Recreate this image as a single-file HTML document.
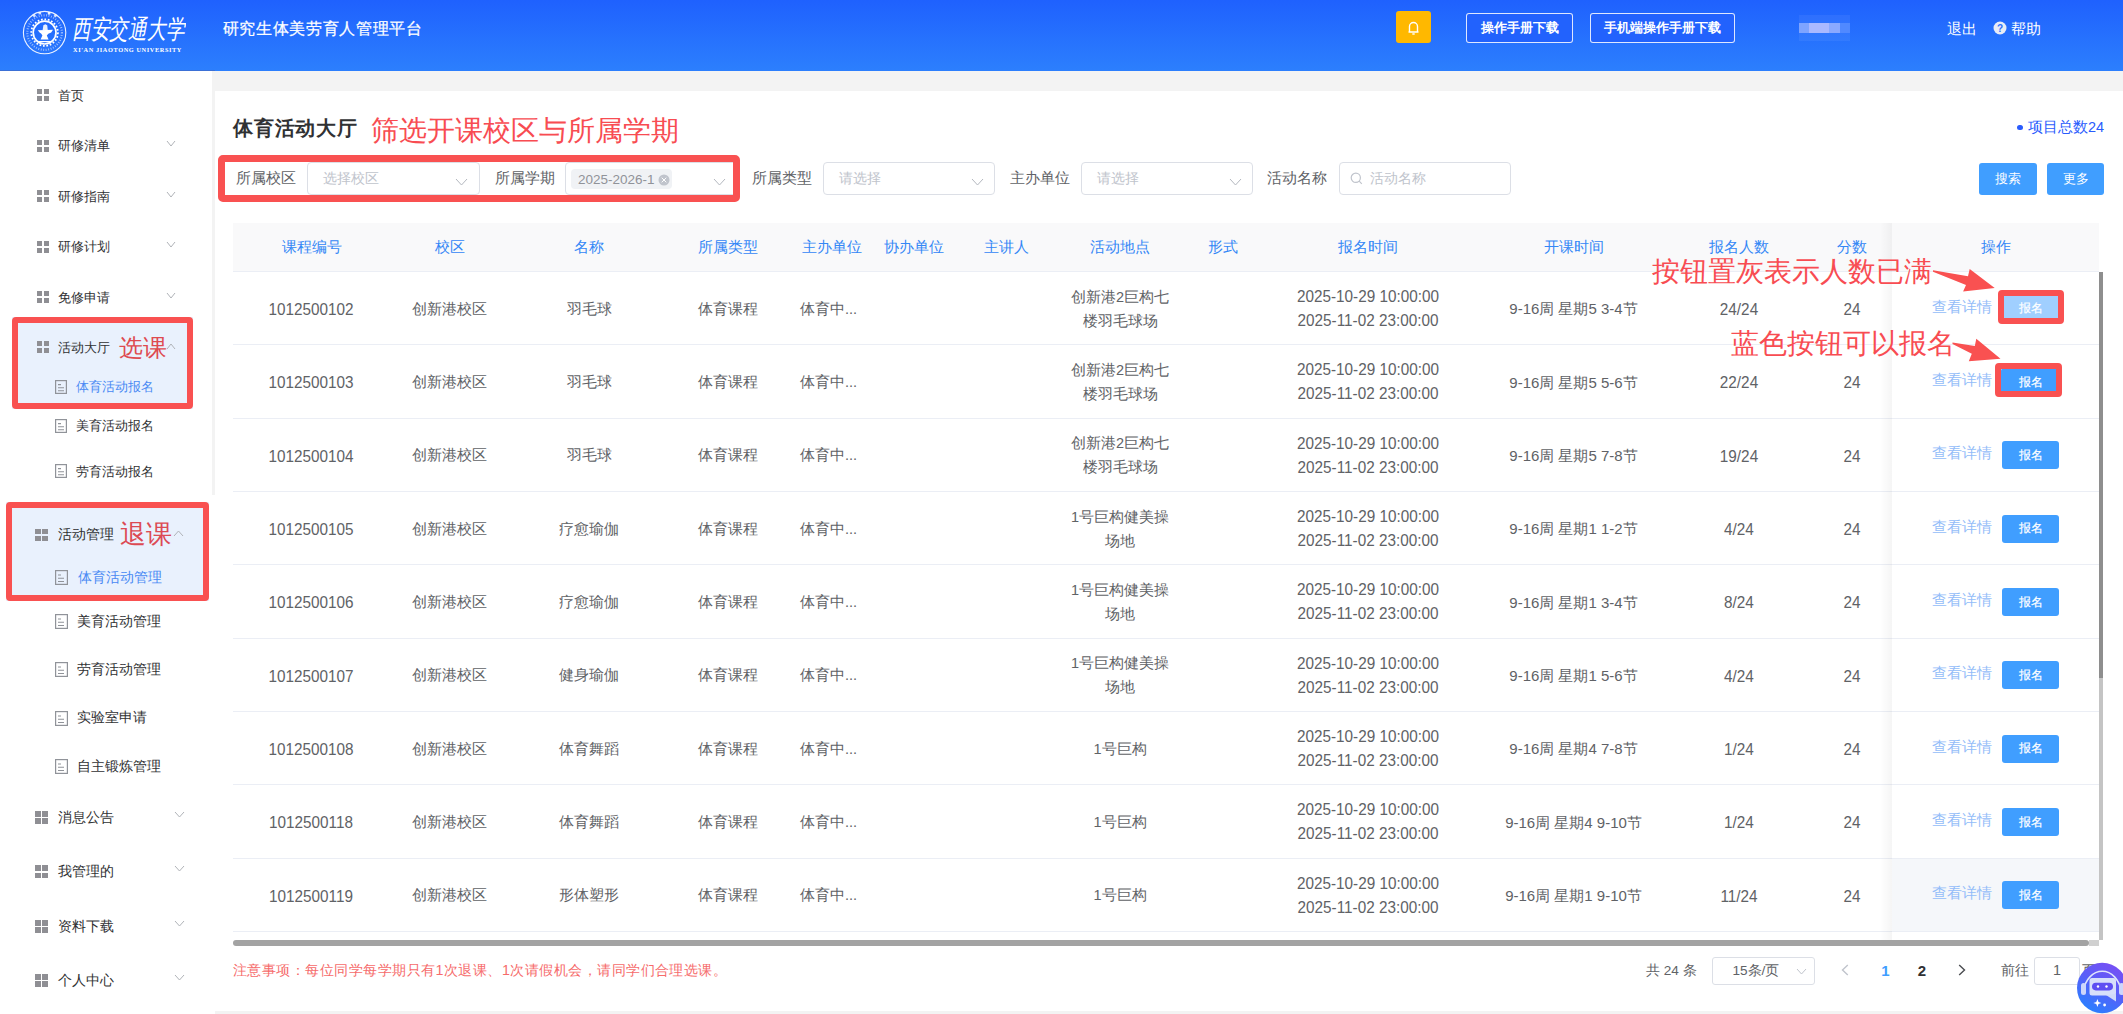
<!DOCTYPE html>
<html><head><meta charset="utf-8"><title>体育活动大厅</title>
<style>
html,body{margin:0;padding:0;}
body{width:2123px;height:1014px;overflow:hidden;position:relative;background:#fff;font-family:"Liberation Sans", sans-serif;}
.t{position:absolute;white-space:nowrap;}
.b{position:absolute;box-sizing:border-box;}
svg{position:absolute;overflow:visible;}
</style></head><body>

<div class="b" style="left:212px;top:70px;width:1911px;height:425px;background:#f3f3f3"></div>
<div class="b" style="left:215px;top:70px;width:1908px;height:944px;background:#f3f3f3"></div>
<div class="b" style="left:215px;top:91px;width:1908px;height:920px;background:#fff"></div>
<div class="b" style="left:0px;top:0px;width:2123px;height:71px;background:linear-gradient(180deg,#1f61fe 0%,#2c7ffd 100%)"></div>
<div class="b" style="left:0px;top:70px;width:215px;height:1px;background:#3b70d6"></div>
<svg style="left:0;top:0" width="212" height="70" viewBox="0 0 212 70">
<g fill="none" stroke="#fff">
<circle cx="44.6" cy="32.6" r="21.2" stroke-width="1.1" opacity="0.9"/>
<circle cx="44.6" cy="32.6" r="17.3" stroke-width="2.2" stroke-dasharray="0.9 1.6" opacity="0.55"/>
<circle cx="44.6" cy="32.6" r="13.3" stroke-width="1.8" stroke-dasharray="1.7 1.75"/>
<circle cx="44.6" cy="32.6" r="11.4" stroke-width="1.7"/>
</g>
<g fill="#fff">
<rect x="33" y="14.5" width="2.6" height="2.6" transform="rotate(-35 34.3 15.8)" opacity="0.8"/>
<rect x="38.5" y="12" width="2.6" height="2.4" opacity="0.8"/>
<rect x="47.8" y="12" width="2.6" height="2.6" opacity="0.9"/>
<rect x="54" y="14.5" width="2.6" height="2.6" transform="rotate(35 55.3 15.8)" opacity="0.8"/>
<path d="M37.8 30.2 L53 29.8 L51.2 32.6 Q47.6 33.6 46.8 35.6 L48.6 39.6 L40.6 39.6 L42.4 35.6 Q41.6 33.6 39.6 32.6 Z"/>
<path d="M42.6 30.2 L43.4 25.2 L45.4 24.2 L47.2 25.2 L47.8 30.2 Z" opacity="0.9"/>
<rect x="38.6" y="41" width="12.2" height="1.2"/>
</g>
</svg>
<div class="t" style="left:72.0px;top:10.0px;font-size:26px;line-height:39px;color:#fff;font-weight:normal;font-family:&#39;Liberation Serif&#39;,serif;font-style:italic;transform:scaleX(0.72);transform-origin:0 50%">西安交通大学</div>
<div class="t" style="left:73.0px;top:44.5px;font-size:6.3px;line-height:9px;color:#fff;font-weight:normal;font-family:&#39;Liberation Serif&#39;,serif;letter-spacing:0.6px;font-weight:bold">XI&#39;AN JIAOTONG UNIVERSITY</div>
<div class="t" style="left:222.5px;top:15.6px;font-size:16.3px;line-height:24px;color:#fff;font-weight:normal;letter-spacing:0.68px;-webkit-text-stroke:0.25px #fff">研究生体美劳育人管理平台</div>
<div class="b" style="left:1396px;top:11px;width:35px;height:32px;background:#ffb800;border-radius:3px"></div>
<svg style="left:1396px;top:11px" width="35" height="32" viewBox="0 0 35 32">
<path d="M12.5 21 L22.5 21 M13.5 21 V15.5 A4 4 0 0 1 21.5 15.5 V21" fill="none" stroke="#fff" stroke-width="1.4"/>
<path d="M16.3 23 h2.4" stroke="#fff" stroke-width="1.4"/>
</svg>
<div class="b" style="left:1466px;top:13px;width:107px;height:30px;border:1.5px solid rgba(255,255,255,0.85);border-radius:3px;background:#2262fd"></div>
<div class="t" style="left:1466.0px;top:19.0px;width:107px;text-align:center;font-size:12.5px;line-height:18px;color:#fff;font-weight:bold;">操作手册下载</div>
<div class="b" style="left:1590px;top:13px;width:145px;height:30px;border:1.5px solid rgba(255,255,255,0.85);border-radius:3px;background:#2262fd"></div>
<div class="t" style="left:1590.0px;top:19.0px;width:145px;text-align:center;font-size:12.5px;line-height:18px;color:#fff;font-weight:bold;">手机端操作手册下载</div>
<div class="b" style="left:1799px;top:15px;width:51px;height:26px;background:rgba(255,255,255,0.06)"></div>
<div class="b" style="left:1799px;top:23px;width:10px;height:10px;background:#7ea4ff"></div>
<div class="b" style="left:1809px;top:23px;width:20px;height:10px;background:#aab9ff"></div>
<div class="b" style="left:1829px;top:23px;width:11px;height:10px;background:#8aa9ff"></div>
<div class="b" style="left:1840px;top:23px;width:10px;height:10px;background:#5089ff"></div>
<div class="t" style="left:1947.0px;top:17.5px;font-size:15px;line-height:22px;color:#fff;font-weight:normal;">退出</div>
<svg style="left:1993px;top:21px" width="14" height="14" viewBox="0 0 14 14">
<circle cx="7" cy="7" r="6.5" fill="#e8ecf6"/>
<text x="7" y="10.8" font-size="10" text-anchor="middle" fill="#2c6ffd" font-family="Liberation Sans" font-weight="bold">?</text>
</svg>
<div class="t" style="left:2011.0px;top:17.5px;font-size:15px;line-height:22px;color:#fff;font-weight:normal;">帮助</div>
<div class="b" style="left:12px;top:317px;width:181px;height:92px;background:#e9f1fd"></div>
<div class="b" style="left:6px;top:502px;width:203px;height:99px;background:#e9f1fd"></div>
<div class="b" style="left:37px;top:89.0px;width:5px;height:5px;background:#8f8f94"></div><div class="b" style="left:44px;top:89.0px;width:5px;height:5px;background:#8f8f94"></div><div class="b" style="left:37px;top:96.0px;width:5px;height:5px;background:#8f8f94"></div><div class="b" style="left:44px;top:96.0px;width:5px;height:5px;background:#8f8f94"></div>
<div class="t" style="left:58.0px;top:85.5px;font-size:13px;line-height:19px;color:#303133;font-weight:normal;">首页</div>
<div class="b" style="left:37px;top:139.5px;width:5px;height:5px;background:#8f8f94"></div><div class="b" style="left:44px;top:139.5px;width:5px;height:5px;background:#8f8f94"></div><div class="b" style="left:37px;top:146.5px;width:5px;height:5px;background:#8f8f94"></div><div class="b" style="left:44px;top:146.5px;width:5px;height:5px;background:#8f8f94"></div>
<div class="t" style="left:58.0px;top:136.0px;font-size:13px;line-height:19px;color:#303133;font-weight:normal;">研修清单</div>
<svg style="left:167px;top:141.0px" width="8" height="5" viewBox="0 0 8 5"><path d="M0 0 L4.0 5 L8 0" fill="none" stroke="#b0b3b8" stroke-width="1"/></svg>
<div class="b" style="left:37px;top:190.0px;width:5px;height:5px;background:#8f8f94"></div><div class="b" style="left:44px;top:190.0px;width:5px;height:5px;background:#8f8f94"></div><div class="b" style="left:37px;top:197.0px;width:5px;height:5px;background:#8f8f94"></div><div class="b" style="left:44px;top:197.0px;width:5px;height:5px;background:#8f8f94"></div>
<div class="t" style="left:58.0px;top:186.5px;font-size:13px;line-height:19px;color:#303133;font-weight:normal;">研修指南</div>
<svg style="left:167px;top:191.5px" width="8" height="5" viewBox="0 0 8 5"><path d="M0 0 L4.0 5 L8 0" fill="none" stroke="#b0b3b8" stroke-width="1"/></svg>
<div class="b" style="left:37px;top:240.5px;width:5px;height:5px;background:#8f8f94"></div><div class="b" style="left:44px;top:240.5px;width:5px;height:5px;background:#8f8f94"></div><div class="b" style="left:37px;top:247.5px;width:5px;height:5px;background:#8f8f94"></div><div class="b" style="left:44px;top:247.5px;width:5px;height:5px;background:#8f8f94"></div>
<div class="t" style="left:58.0px;top:237.0px;font-size:13px;line-height:19px;color:#303133;font-weight:normal;">研修计划</div>
<svg style="left:167px;top:242.0px" width="8" height="5" viewBox="0 0 8 5"><path d="M0 0 L4.0 5 L8 0" fill="none" stroke="#b0b3b8" stroke-width="1"/></svg>
<div class="b" style="left:37px;top:291.0px;width:5px;height:5px;background:#8f8f94"></div><div class="b" style="left:44px;top:291.0px;width:5px;height:5px;background:#8f8f94"></div><div class="b" style="left:37px;top:298.0px;width:5px;height:5px;background:#8f8f94"></div><div class="b" style="left:44px;top:298.0px;width:5px;height:5px;background:#8f8f94"></div>
<div class="t" style="left:58.0px;top:287.5px;font-size:13px;line-height:19px;color:#303133;font-weight:normal;">免修申请</div>
<svg style="left:167px;top:292.5px" width="8" height="5" viewBox="0 0 8 5"><path d="M0 0 L4.0 5 L8 0" fill="none" stroke="#b0b3b8" stroke-width="1"/></svg>
<div class="b" style="left:37px;top:341.0px;width:5px;height:5px;background:#8f8f94"></div><div class="b" style="left:44px;top:341.0px;width:5px;height:5px;background:#8f8f94"></div><div class="b" style="left:37px;top:348.0px;width:5px;height:5px;background:#8f8f94"></div><div class="b" style="left:44px;top:348.0px;width:5px;height:5px;background:#8f8f94"></div>
<div class="t" style="left:58.0px;top:337.5px;font-size:13px;line-height:19px;color:#303133;font-weight:normal;">活动大厅</div>
<svg style="left:167px;top:343.5px" width="8" height="5" viewBox="0 0 8 5"><path d="M0 5 L4.0 0 L8 5" fill="none" stroke="#b0b3b8" stroke-width="1"/></svg>
<svg style="left:55px;top:380.0px" width="12" height="14" viewBox="0 0 12 14">
<rect x="0.6" y="0.6" width="10.8" height="12.8" fill="none" stroke="#909399" stroke-width="1.2"/>
<path d="M3 4.62h3 M3 7.700000000000001h6 M3 10.780000000000001h6" stroke="#909399" stroke-width="1.1"/>
</svg>
<div class="t" style="left:76.0px;top:378.0px;font-size:12.5px;line-height:18px;color:#4a8af4;font-weight:normal;">体育活动报名</div>
<svg style="left:55px;top:419.0px" width="12" height="14" viewBox="0 0 12 14">
<rect x="0.6" y="0.6" width="10.8" height="12.8" fill="none" stroke="#909399" stroke-width="1.2"/>
<path d="M3 4.62h3 M3 7.700000000000001h6 M3 10.780000000000001h6" stroke="#909399" stroke-width="1.1"/>
</svg>
<div class="t" style="left:76.0px;top:417.0px;font-size:12.5px;line-height:18px;color:#303133;font-weight:normal;">美育活动报名</div>
<svg style="left:55px;top:464.0px" width="12" height="14" viewBox="0 0 12 14">
<rect x="0.6" y="0.6" width="10.8" height="12.8" fill="none" stroke="#909399" stroke-width="1.2"/>
<path d="M3 4.62h3 M3 7.700000000000001h6 M3 10.780000000000001h6" stroke="#909399" stroke-width="1.1"/>
</svg>
<div class="t" style="left:76.0px;top:462.6px;font-size:12.5px;line-height:18px;color:#303133;font-weight:normal;">劳育活动报名</div>
<div class="b" style="left:35px;top:528.5px;width:5.8px;height:5.8px;background:#8f8f94"></div><div class="b" style="left:42.2px;top:528.5px;width:5.8px;height:5.8px;background:#8f8f94"></div><div class="b" style="left:35px;top:535.7px;width:5.8px;height:5.8px;background:#8f8f94"></div><div class="b" style="left:42.2px;top:535.7px;width:5.8px;height:5.8px;background:#8f8f94"></div>
<div class="t" style="left:58.0px;top:525.0px;font-size:13.5px;line-height:20px;color:#303133;font-weight:normal;">活动管理</div>
<svg style="left:174px;top:531.0px" width="9" height="5" viewBox="0 0 9 5"><path d="M0 5 L4.5 0 L9 5" fill="none" stroke="#b0b3b8" stroke-width="1"/></svg>
<svg style="left:55px;top:570.0px" width="13" height="15" viewBox="0 0 13 15">
<rect x="0.6" y="0.6" width="11.8" height="13.8" fill="none" stroke="#909399" stroke-width="1.2"/>
<path d="M3 4.95h3 M3 8.25h6 M3 11.55h6" stroke="#909399" stroke-width="1.1"/>
</svg>
<div class="t" style="left:78.0px;top:567.5px;font-size:13.5px;line-height:20px;color:#4a8af4;font-weight:normal;">体育活动管理</div>
<svg style="left:55px;top:614.0px" width="13" height="15" viewBox="0 0 13 15">
<rect x="0.6" y="0.6" width="11.8" height="13.8" fill="none" stroke="#909399" stroke-width="1.2"/>
<path d="M3 4.95h3 M3 8.25h6 M3 11.55h6" stroke="#909399" stroke-width="1.1"/>
</svg>
<div class="t" style="left:76.6px;top:611.5px;font-size:13.5px;line-height:20px;color:#303133;font-weight:normal;">美育活动管理</div>
<svg style="left:55px;top:662.3px" width="13" height="15" viewBox="0 0 13 15">
<rect x="0.6" y="0.6" width="11.8" height="13.8" fill="none" stroke="#909399" stroke-width="1.2"/>
<path d="M3 4.95h3 M3 8.25h6 M3 11.55h6" stroke="#909399" stroke-width="1.1"/>
</svg>
<div class="t" style="left:76.6px;top:659.8px;font-size:13.5px;line-height:20px;color:#303133;font-weight:normal;">劳育活动管理</div>
<svg style="left:55px;top:710.7px" width="13" height="15" viewBox="0 0 13 15">
<rect x="0.6" y="0.6" width="11.8" height="13.8" fill="none" stroke="#909399" stroke-width="1.2"/>
<path d="M3 4.95h3 M3 8.25h6 M3 11.55h6" stroke="#909399" stroke-width="1.1"/>
</svg>
<div class="t" style="left:76.6px;top:708.2px;font-size:13.5px;line-height:20px;color:#303133;font-weight:normal;">实验室申请</div>
<svg style="left:55px;top:759.0px" width="13" height="15" viewBox="0 0 13 15">
<rect x="0.6" y="0.6" width="11.8" height="13.8" fill="none" stroke="#909399" stroke-width="1.2"/>
<path d="M3 4.95h3 M3 8.25h6 M3 11.55h6" stroke="#909399" stroke-width="1.1"/>
</svg>
<div class="t" style="left:76.6px;top:756.5px;font-size:13.5px;line-height:20px;color:#303133;font-weight:normal;">自主锻炼管理</div>
<div class="b" style="left:35px;top:811.2px;width:5.8px;height:5.8px;background:#8f8f94"></div><div class="b" style="left:42.2px;top:811.2px;width:5.8px;height:5.8px;background:#8f8f94"></div><div class="b" style="left:35px;top:818.4000000000001px;width:5.8px;height:5.8px;background:#8f8f94"></div><div class="b" style="left:42.2px;top:818.4000000000001px;width:5.8px;height:5.8px;background:#8f8f94"></div>
<div class="t" style="left:58.0px;top:807.7px;font-size:13.5px;line-height:20px;color:#303133;font-weight:normal;">消息公告</div>
<svg style="left:175px;top:812.2px" width="9" height="5" viewBox="0 0 9 5"><path d="M0 0 L4.5 5 L9 0" fill="none" stroke="#b0b3b8" stroke-width="1"/></svg>
<div class="b" style="left:35px;top:865.3px;width:5.8px;height:5.8px;background:#8f8f94"></div><div class="b" style="left:42.2px;top:865.3px;width:5.8px;height:5.8px;background:#8f8f94"></div><div class="b" style="left:35px;top:872.5px;width:5.8px;height:5.8px;background:#8f8f94"></div><div class="b" style="left:42.2px;top:872.5px;width:5.8px;height:5.8px;background:#8f8f94"></div>
<div class="t" style="left:58.0px;top:861.8px;font-size:13.5px;line-height:20px;color:#303133;font-weight:normal;">我管理的</div>
<svg style="left:175px;top:866.3px" width="9" height="5" viewBox="0 0 9 5"><path d="M0 0 L4.5 5 L9 0" fill="none" stroke="#b0b3b8" stroke-width="1"/></svg>
<div class="b" style="left:35px;top:920.0px;width:5.8px;height:5.8px;background:#8f8f94"></div><div class="b" style="left:42.2px;top:920.0px;width:5.8px;height:5.8px;background:#8f8f94"></div><div class="b" style="left:35px;top:927.2px;width:5.8px;height:5.8px;background:#8f8f94"></div><div class="b" style="left:42.2px;top:927.2px;width:5.8px;height:5.8px;background:#8f8f94"></div>
<div class="t" style="left:58.0px;top:916.5px;font-size:13.5px;line-height:20px;color:#303133;font-weight:normal;">资料下载</div>
<svg style="left:175px;top:921.0px" width="9" height="5" viewBox="0 0 9 5"><path d="M0 0 L4.5 5 L9 0" fill="none" stroke="#b0b3b8" stroke-width="1"/></svg>
<div class="b" style="left:35px;top:974.0px;width:5.8px;height:5.8px;background:#8f8f94"></div><div class="b" style="left:42.2px;top:974.0px;width:5.8px;height:5.8px;background:#8f8f94"></div><div class="b" style="left:35px;top:981.2px;width:5.8px;height:5.8px;background:#8f8f94"></div><div class="b" style="left:42.2px;top:981.2px;width:5.8px;height:5.8px;background:#8f8f94"></div>
<div class="t" style="left:58.0px;top:970.5px;font-size:13.5px;line-height:20px;color:#303133;font-weight:normal;">个人中心</div>
<svg style="left:175px;top:975.0px" width="9" height="5" viewBox="0 0 9 5"><path d="M0 0 L4.5 5 L9 0" fill="none" stroke="#b0b3b8" stroke-width="1"/></svg>
<div class="b" style="left:12px;top:317px;width:181px;height:92px;border:6px solid #f95151;border-radius:4px"></div>
<div class="t" style="left:119.0px;top:329.5px;font-size:24px;line-height:36px;color:#de4a50;font-weight:normal;">选课</div>
<div class="b" style="left:6px;top:502px;width:203px;height:99px;border:6px solid #f95151;border-radius:4px"></div>
<div class="t" style="left:120.0px;top:514.5px;font-size:26px;line-height:39px;color:#dc4a54;font-weight:normal;">退课</div>
<div class="t" style="left:233.0px;top:112.6px;font-size:20.4px;line-height:30px;color:#303133;font-weight:bold;letter-spacing:0.75px">体育活动大厅</div>
<div class="t" style="left:371.0px;top:109.7px;font-size:27.5px;line-height:41px;color:#f84c52;font-weight:normal;">筛选开课校区与所属学期</div>
<div class="t" style="left:2017px;top:124.5px;width:5.5px;height:5.5px;border-radius:50%;background:#2a5cfd"></div>
<div class="t" style="left:2028.0px;top:116.5px;font-size:14.5px;line-height:21px;color:#2a5cfd;font-weight:normal;">项目总数24</div>
<div class="t" style="left:236.0px;top:168.0px;font-size:14.5px;line-height:21px;color:#606266;font-weight:normal;">所属校区</div>
<div class="b" style="left:307px;top:162px;width:173px;height:33px;border:1px solid #dcdfe6;border-radius:4px;background:#fff"></div><div class="t" style="left:323.0px;top:168.5px;font-size:13.5px;line-height:20px;color:#c0c4cc;font-weight:normal;">选择校区</div><svg style="left:456px;top:178.5px" width="11" height="6" viewBox="0 0 11 6"><path d="M0 0 L5.5 6 L11 0" fill="none" stroke="#b4b8bf" stroke-width="1"/></svg>
<div class="t" style="left:495.0px;top:168.0px;font-size:14.5px;line-height:21px;color:#606266;font-weight:normal;">所属学期</div>
<div class="b" style="left:565px;top:162px;width:175px;height:33px;border:1px solid #dcdfe6;border-radius:4px;background:#fff"></div><svg style="left:714px;top:178.5px" width="11" height="6" viewBox="0 0 11 6"><path d="M0 0 L5.5 6 L11 0" fill="none" stroke="#b4b8bf" stroke-width="1"/></svg>
<div class="b" style="left:571px;top:169px;width:101px;height:20px;background:#f0f2f5;border-radius:4px"></div>
<div class="t" style="left:578.0px;top:170.0px;font-size:13.5px;line-height:20px;color:#909399;font-weight:normal;">2025-2026-1</div>
<svg style="left:658px;top:174px" width="12" height="12" viewBox="0 0 12 12"><circle cx="6" cy="6" r="5.5" fill="#c0c4cc"/><path d="M3.7 3.7l4.6 4.6M8.3 3.7l-4.6 4.6" stroke="#fff" stroke-width="1"/></svg>
<div class="b" style="left:218px;top:155px;width:522px;height:47px;border:7px solid #f95151;border-radius:5px"></div>
<div class="t" style="left:752.0px;top:168.0px;font-size:14.5px;line-height:21px;color:#606266;font-weight:normal;">所属类型</div>
<div class="b" style="left:823px;top:162px;width:172px;height:33px;border:1px solid #dcdfe6;border-radius:4px;background:#fff"></div><div class="t" style="left:839.0px;top:168.5px;font-size:13.5px;line-height:20px;color:#c0c4cc;font-weight:normal;">请选择</div><svg style="left:972px;top:178.5px" width="11" height="6" viewBox="0 0 11 6"><path d="M0 0 L5.5 6 L11 0" fill="none" stroke="#b4b8bf" stroke-width="1"/></svg>
<div class="t" style="left:1010.0px;top:168.0px;font-size:14.5px;line-height:21px;color:#606266;font-weight:normal;">主办单位</div>
<div class="b" style="left:1081px;top:162px;width:172px;height:33px;border:1px solid #dcdfe6;border-radius:4px;background:#fff"></div><div class="t" style="left:1097.0px;top:168.5px;font-size:13.5px;line-height:20px;color:#c0c4cc;font-weight:normal;">请选择</div><svg style="left:1230px;top:178.5px" width="11" height="6" viewBox="0 0 11 6"><path d="M0 0 L5.5 6 L11 0" fill="none" stroke="#b4b8bf" stroke-width="1"/></svg>
<div class="t" style="left:1267.0px;top:168.0px;font-size:14.5px;line-height:21px;color:#606266;font-weight:normal;">活动名称</div>
<div class="b" style="left:1339px;top:162px;width:172px;height:33px;border:1px solid #dcdfe6;border-radius:4px;background:#fff"></div>
<svg style="left:1350px;top:172px" width="13" height="13" viewBox="0 0 13 13"><circle cx="5.8" cy="5.8" r="4.6" fill="none" stroke="#c0c4cc" stroke-width="1.2"/><path d="M9.2 9.2l2.6 2.6" stroke="#c0c4cc" stroke-width="1.2"/></svg>
<div class="t" style="left:1370.0px;top:168.5px;font-size:13.5px;line-height:20px;color:#c0c4cc;font-weight:normal;">活动名称</div>
<div class="b" style="left:1979px;top:163px;width:58px;height:32px;background:#409eff;border-radius:3px"></div>
<div class="t" style="left:1979.0px;top:169.5px;width:58px;text-align:center;font-size:12.5px;line-height:18px;color:#fff;font-weight:normal;">搜索</div>
<div class="b" style="left:2047px;top:163px;width:57px;height:32px;background:#409eff;border-radius:3px"></div>
<div class="t" style="left:2047.0px;top:169.5px;width:57px;text-align:center;font-size:12.5px;line-height:18px;color:#fff;font-weight:normal;">更多</div>
<div class="b" style="left:233px;top:223px;width:1866px;height:48px;background:#f9f9fa"></div>
<div class="b" style="left:233px;top:271px;width:1866px;height:1px;background:#ebeef5"></div>
<div class="t" style="left:231.5px;top:236.5px;width:160px;text-align:center;font-size:14.5px;line-height:21px;color:#3487f6;font-weight:normal;">课程编号</div>
<div class="t" style="left:370.0px;top:236.5px;width:160px;text-align:center;font-size:14.5px;line-height:21px;color:#3487f6;font-weight:normal;">校区</div>
<div class="t" style="left:509.0px;top:236.5px;width:160px;text-align:center;font-size:14.5px;line-height:21px;color:#3487f6;font-weight:normal;">名称</div>
<div class="t" style="left:648.0px;top:236.5px;width:160px;text-align:center;font-size:14.5px;line-height:21px;color:#3487f6;font-weight:normal;">所属类型</div>
<div class="t" style="left:751.5px;top:236.5px;width:160px;text-align:center;font-size:14.5px;line-height:21px;color:#3487f6;font-weight:normal;">主办单位</div>
<div class="t" style="left:834.0px;top:236.5px;width:160px;text-align:center;font-size:14.5px;line-height:21px;color:#3487f6;font-weight:normal;">协办单位</div>
<div class="t" style="left:926.0px;top:236.5px;width:160px;text-align:center;font-size:14.5px;line-height:21px;color:#3487f6;font-weight:normal;">主讲人</div>
<div class="t" style="left:1040.0px;top:236.5px;width:160px;text-align:center;font-size:14.5px;line-height:21px;color:#3487f6;font-weight:normal;">活动地点</div>
<div class="t" style="left:1143.0px;top:236.5px;width:160px;text-align:center;font-size:14.5px;line-height:21px;color:#3487f6;font-weight:normal;">形式</div>
<div class="t" style="left:1287.5px;top:236.5px;width:160px;text-align:center;font-size:14.5px;line-height:21px;color:#3487f6;font-weight:normal;">报名时间</div>
<div class="t" style="left:1493.5px;top:236.5px;width:160px;text-align:center;font-size:14.5px;line-height:21px;color:#3487f6;font-weight:normal;">开课时间</div>
<div class="t" style="left:1658.5px;top:236.5px;width:160px;text-align:center;font-size:14.5px;line-height:21px;color:#3487f6;font-weight:normal;">报名人数</div>
<div class="t" style="left:1772.0px;top:236.5px;width:160px;text-align:center;font-size:14.5px;line-height:21px;color:#3487f6;font-weight:normal;">分数</div>
<div class="t" style="left:1916.0px;top:236.5px;width:160px;text-align:center;font-size:14.5px;line-height:21px;color:#3487f6;font-weight:normal;">操作</div>
<div class="b" style="left:1892px;top:858px;width:207px;height:73px;background:#f5f7fa"></div>
<div class="b" style="left:233px;top:344px;width:1866px;height:1px;background:#ebeef5"></div>
<div class="t" style="left:230.5px;top:296.9px;width:160px;text-align:center;font-size:17.3px;line-height:25px;color:#606266;font-weight:normal;transform:scaleX(0.885)">1012500102</div>
<div class="t" style="left:369.5px;top:298.7px;width:160px;text-align:center;font-size:14.5px;line-height:21px;color:#606266;font-weight:normal;">创新港校区</div>
<div class="t" style="left:509.0px;top:298.7px;width:160px;text-align:center;font-size:14.5px;line-height:21px;color:#606266;font-weight:normal;">羽毛球</div>
<div class="t" style="left:648.0px;top:298.7px;width:160px;text-align:center;font-size:14.5px;line-height:21px;color:#606266;font-weight:normal;">体育课程</div>
<div class="t" style="left:800.0px;top:298.7px;font-size:14.5px;line-height:21px;color:#606266;font-weight:normal;">体育中...</div>
<div class="t" style="left:1020.0px;top:286.7px;width:200px;text-align:center;font-size:14.5px;line-height:21px;color:#606266;font-weight:normal;">创新港2巨构七</div>
<div class="t" style="left:1020.0px;top:310.7px;width:200px;text-align:center;font-size:14.5px;line-height:21px;color:#606266;font-weight:normal;">楼羽毛球场</div>
<div class="t" style="left:1247.5px;top:283.9px;width:240px;text-align:center;font-size:17.3px;line-height:25px;color:#606266;font-weight:normal;transform:scaleX(0.885)">2025-10-29 10:00:00</div>
<div class="t" style="left:1247.5px;top:307.9px;width:240px;text-align:center;font-size:17.3px;line-height:25px;color:#606266;font-weight:normal;transform:scaleX(0.885)">2025-11-02 23:00:00</div>
<div class="t" style="left:1453.5px;top:298.2px;width:240px;text-align:center;font-size:15px;line-height:22px;color:#606266;font-weight:normal;">9-16周 星期5 3-4节</div>
<div class="t" style="left:1658.5px;top:296.9px;width:160px;text-align:center;font-size:17.3px;line-height:25px;color:#606266;font-weight:normal;transform:scaleX(0.885)">24/24</div>
<div class="t" style="left:1802.0px;top:296.9px;width:100px;text-align:center;font-size:17.3px;line-height:25px;color:#606266;font-weight:normal;transform:scaleX(0.885)">24</div>
<div class="t" style="left:1912.0px;top:296.7px;width:100px;text-align:center;font-size:14.5px;line-height:21px;color:#94bdf9;font-weight:normal;">查看详情</div>
<div class="b" style="left:2002px;top:295px;width:57px;height:28px;background:#a0cfff;border-radius:3px"></div>
<div class="t" style="left:2002.0px;top:299.4px;width:57px;text-align:center;font-size:12.2px;line-height:18px;color:#fff;font-weight:normal;-webkit-text-stroke:0.2px #fff">报名</div>
<div class="b" style="left:233px;top:418px;width:1866px;height:1px;background:#ebeef5"></div>
<div class="t" style="left:230.5px;top:370.2px;width:160px;text-align:center;font-size:17.3px;line-height:25px;color:#606266;font-weight:normal;transform:scaleX(0.885)">1012500103</div>
<div class="t" style="left:369.5px;top:372.0px;width:160px;text-align:center;font-size:14.5px;line-height:21px;color:#606266;font-weight:normal;">创新港校区</div>
<div class="t" style="left:509.0px;top:372.0px;width:160px;text-align:center;font-size:14.5px;line-height:21px;color:#606266;font-weight:normal;">羽毛球</div>
<div class="t" style="left:648.0px;top:372.0px;width:160px;text-align:center;font-size:14.5px;line-height:21px;color:#606266;font-weight:normal;">体育课程</div>
<div class="t" style="left:800.0px;top:372.0px;font-size:14.5px;line-height:21px;color:#606266;font-weight:normal;">体育中...</div>
<div class="t" style="left:1020.0px;top:360.0px;width:200px;text-align:center;font-size:14.5px;line-height:21px;color:#606266;font-weight:normal;">创新港2巨构七</div>
<div class="t" style="left:1020.0px;top:384.0px;width:200px;text-align:center;font-size:14.5px;line-height:21px;color:#606266;font-weight:normal;">楼羽毛球场</div>
<div class="t" style="left:1247.5px;top:357.2px;width:240px;text-align:center;font-size:17.3px;line-height:25px;color:#606266;font-weight:normal;transform:scaleX(0.885)">2025-10-29 10:00:00</div>
<div class="t" style="left:1247.5px;top:381.2px;width:240px;text-align:center;font-size:17.3px;line-height:25px;color:#606266;font-weight:normal;transform:scaleX(0.885)">2025-11-02 23:00:00</div>
<div class="t" style="left:1453.5px;top:371.5px;width:240px;text-align:center;font-size:15px;line-height:22px;color:#606266;font-weight:normal;">9-16周 星期5 5-6节</div>
<div class="t" style="left:1658.5px;top:370.2px;width:160px;text-align:center;font-size:17.3px;line-height:25px;color:#606266;font-weight:normal;transform:scaleX(0.885)">22/24</div>
<div class="t" style="left:1802.0px;top:370.2px;width:100px;text-align:center;font-size:17.3px;line-height:25px;color:#606266;font-weight:normal;transform:scaleX(0.885)">24</div>
<div class="t" style="left:1912.0px;top:370.0px;width:100px;text-align:center;font-size:14.5px;line-height:21px;color:#94bdf9;font-weight:normal;">查看详情</div>
<div class="b" style="left:2001px;top:368px;width:58px;height:28px;background:#409eff;border-radius:3px"></div>
<div class="t" style="left:2002.0px;top:372.7px;width:57px;text-align:center;font-size:12.2px;line-height:18px;color:#fff;font-weight:normal;-webkit-text-stroke:0.2px #fff">报名</div>
<div class="b" style="left:233px;top:491px;width:1866px;height:1px;background:#ebeef5"></div>
<div class="t" style="left:230.5px;top:443.5px;width:160px;text-align:center;font-size:17.3px;line-height:25px;color:#606266;font-weight:normal;transform:scaleX(0.885)">1012500104</div>
<div class="t" style="left:369.5px;top:445.3px;width:160px;text-align:center;font-size:14.5px;line-height:21px;color:#606266;font-weight:normal;">创新港校区</div>
<div class="t" style="left:509.0px;top:445.3px;width:160px;text-align:center;font-size:14.5px;line-height:21px;color:#606266;font-weight:normal;">羽毛球</div>
<div class="t" style="left:648.0px;top:445.3px;width:160px;text-align:center;font-size:14.5px;line-height:21px;color:#606266;font-weight:normal;">体育课程</div>
<div class="t" style="left:800.0px;top:445.3px;font-size:14.5px;line-height:21px;color:#606266;font-weight:normal;">体育中...</div>
<div class="t" style="left:1020.0px;top:433.3px;width:200px;text-align:center;font-size:14.5px;line-height:21px;color:#606266;font-weight:normal;">创新港2巨构七</div>
<div class="t" style="left:1020.0px;top:457.3px;width:200px;text-align:center;font-size:14.5px;line-height:21px;color:#606266;font-weight:normal;">楼羽毛球场</div>
<div class="t" style="left:1247.5px;top:430.5px;width:240px;text-align:center;font-size:17.3px;line-height:25px;color:#606266;font-weight:normal;transform:scaleX(0.885)">2025-10-29 10:00:00</div>
<div class="t" style="left:1247.5px;top:454.5px;width:240px;text-align:center;font-size:17.3px;line-height:25px;color:#606266;font-weight:normal;transform:scaleX(0.885)">2025-11-02 23:00:00</div>
<div class="t" style="left:1453.5px;top:444.8px;width:240px;text-align:center;font-size:15px;line-height:22px;color:#606266;font-weight:normal;">9-16周 星期5 7-8节</div>
<div class="t" style="left:1658.5px;top:443.5px;width:160px;text-align:center;font-size:17.3px;line-height:25px;color:#606266;font-weight:normal;transform:scaleX(0.885)">19/24</div>
<div class="t" style="left:1802.0px;top:443.5px;width:100px;text-align:center;font-size:17.3px;line-height:25px;color:#606266;font-weight:normal;transform:scaleX(0.885)">24</div>
<div class="t" style="left:1912.0px;top:443.3px;width:100px;text-align:center;font-size:14.5px;line-height:21px;color:#94bdf9;font-weight:normal;">查看详情</div>
<div class="b" style="left:2002px;top:441px;width:57px;height:28px;background:#409eff;border-radius:3px"></div>
<div class="t" style="left:2002.0px;top:446.0px;width:57px;text-align:center;font-size:12.2px;line-height:18px;color:#fff;font-weight:normal;-webkit-text-stroke:0.2px #fff">报名</div>
<div class="b" style="left:233px;top:564px;width:1866px;height:1px;background:#ebeef5"></div>
<div class="t" style="left:230.5px;top:516.9px;width:160px;text-align:center;font-size:17.3px;line-height:25px;color:#606266;font-weight:normal;transform:scaleX(0.885)">1012500105</div>
<div class="t" style="left:369.5px;top:518.7px;width:160px;text-align:center;font-size:14.5px;line-height:21px;color:#606266;font-weight:normal;">创新港校区</div>
<div class="t" style="left:509.0px;top:518.7px;width:160px;text-align:center;font-size:14.5px;line-height:21px;color:#606266;font-weight:normal;">疗愈瑜伽</div>
<div class="t" style="left:648.0px;top:518.7px;width:160px;text-align:center;font-size:14.5px;line-height:21px;color:#606266;font-weight:normal;">体育课程</div>
<div class="t" style="left:800.0px;top:518.7px;font-size:14.5px;line-height:21px;color:#606266;font-weight:normal;">体育中...</div>
<div class="t" style="left:1020.0px;top:506.7px;width:200px;text-align:center;font-size:14.5px;line-height:21px;color:#606266;font-weight:normal;">1号巨构健美操</div>
<div class="t" style="left:1020.0px;top:530.7px;width:200px;text-align:center;font-size:14.5px;line-height:21px;color:#606266;font-weight:normal;">场地</div>
<div class="t" style="left:1247.5px;top:503.9px;width:240px;text-align:center;font-size:17.3px;line-height:25px;color:#606266;font-weight:normal;transform:scaleX(0.885)">2025-10-29 10:00:00</div>
<div class="t" style="left:1247.5px;top:527.9px;width:240px;text-align:center;font-size:17.3px;line-height:25px;color:#606266;font-weight:normal;transform:scaleX(0.885)">2025-11-02 23:00:00</div>
<div class="t" style="left:1453.5px;top:518.2px;width:240px;text-align:center;font-size:15px;line-height:22px;color:#606266;font-weight:normal;">9-16周 星期1 1-2节</div>
<div class="t" style="left:1658.5px;top:516.9px;width:160px;text-align:center;font-size:17.3px;line-height:25px;color:#606266;font-weight:normal;transform:scaleX(0.885)">4/24</div>
<div class="t" style="left:1802.0px;top:516.9px;width:100px;text-align:center;font-size:17.3px;line-height:25px;color:#606266;font-weight:normal;transform:scaleX(0.885)">24</div>
<div class="t" style="left:1912.0px;top:516.7px;width:100px;text-align:center;font-size:14.5px;line-height:21px;color:#94bdf9;font-weight:normal;">查看详情</div>
<div class="b" style="left:2002px;top:515px;width:57px;height:28px;background:#409eff;border-radius:3px"></div>
<div class="t" style="left:2002.0px;top:519.4px;width:57px;text-align:center;font-size:12.2px;line-height:18px;color:#fff;font-weight:normal;-webkit-text-stroke:0.2px #fff">报名</div>
<div class="b" style="left:233px;top:638px;width:1866px;height:1px;background:#ebeef5"></div>
<div class="t" style="left:230.5px;top:590.2px;width:160px;text-align:center;font-size:17.3px;line-height:25px;color:#606266;font-weight:normal;transform:scaleX(0.885)">1012500106</div>
<div class="t" style="left:369.5px;top:592.0px;width:160px;text-align:center;font-size:14.5px;line-height:21px;color:#606266;font-weight:normal;">创新港校区</div>
<div class="t" style="left:509.0px;top:592.0px;width:160px;text-align:center;font-size:14.5px;line-height:21px;color:#606266;font-weight:normal;">疗愈瑜伽</div>
<div class="t" style="left:648.0px;top:592.0px;width:160px;text-align:center;font-size:14.5px;line-height:21px;color:#606266;font-weight:normal;">体育课程</div>
<div class="t" style="left:800.0px;top:592.0px;font-size:14.5px;line-height:21px;color:#606266;font-weight:normal;">体育中...</div>
<div class="t" style="left:1020.0px;top:580.0px;width:200px;text-align:center;font-size:14.5px;line-height:21px;color:#606266;font-weight:normal;">1号巨构健美操</div>
<div class="t" style="left:1020.0px;top:604.0px;width:200px;text-align:center;font-size:14.5px;line-height:21px;color:#606266;font-weight:normal;">场地</div>
<div class="t" style="left:1247.5px;top:577.2px;width:240px;text-align:center;font-size:17.3px;line-height:25px;color:#606266;font-weight:normal;transform:scaleX(0.885)">2025-10-29 10:00:00</div>
<div class="t" style="left:1247.5px;top:601.2px;width:240px;text-align:center;font-size:17.3px;line-height:25px;color:#606266;font-weight:normal;transform:scaleX(0.885)">2025-11-02 23:00:00</div>
<div class="t" style="left:1453.5px;top:591.5px;width:240px;text-align:center;font-size:15px;line-height:22px;color:#606266;font-weight:normal;">9-16周 星期1 3-4节</div>
<div class="t" style="left:1658.5px;top:590.2px;width:160px;text-align:center;font-size:17.3px;line-height:25px;color:#606266;font-weight:normal;transform:scaleX(0.885)">8/24</div>
<div class="t" style="left:1802.0px;top:590.2px;width:100px;text-align:center;font-size:17.3px;line-height:25px;color:#606266;font-weight:normal;transform:scaleX(0.885)">24</div>
<div class="t" style="left:1912.0px;top:590.0px;width:100px;text-align:center;font-size:14.5px;line-height:21px;color:#94bdf9;font-weight:normal;">查看详情</div>
<div class="b" style="left:2002px;top:588px;width:57px;height:28px;background:#409eff;border-radius:3px"></div>
<div class="t" style="left:2002.0px;top:592.7px;width:57px;text-align:center;font-size:12.2px;line-height:18px;color:#fff;font-weight:normal;-webkit-text-stroke:0.2px #fff">报名</div>
<div class="b" style="left:233px;top:711px;width:1866px;height:1px;background:#ebeef5"></div>
<div class="t" style="left:230.5px;top:663.5px;width:160px;text-align:center;font-size:17.3px;line-height:25px;color:#606266;font-weight:normal;transform:scaleX(0.885)">1012500107</div>
<div class="t" style="left:369.5px;top:665.3px;width:160px;text-align:center;font-size:14.5px;line-height:21px;color:#606266;font-weight:normal;">创新港校区</div>
<div class="t" style="left:509.0px;top:665.3px;width:160px;text-align:center;font-size:14.5px;line-height:21px;color:#606266;font-weight:normal;">健身瑜伽</div>
<div class="t" style="left:648.0px;top:665.3px;width:160px;text-align:center;font-size:14.5px;line-height:21px;color:#606266;font-weight:normal;">体育课程</div>
<div class="t" style="left:800.0px;top:665.3px;font-size:14.5px;line-height:21px;color:#606266;font-weight:normal;">体育中...</div>
<div class="t" style="left:1020.0px;top:653.3px;width:200px;text-align:center;font-size:14.5px;line-height:21px;color:#606266;font-weight:normal;">1号巨构健美操</div>
<div class="t" style="left:1020.0px;top:677.3px;width:200px;text-align:center;font-size:14.5px;line-height:21px;color:#606266;font-weight:normal;">场地</div>
<div class="t" style="left:1247.5px;top:650.5px;width:240px;text-align:center;font-size:17.3px;line-height:25px;color:#606266;font-weight:normal;transform:scaleX(0.885)">2025-10-29 10:00:00</div>
<div class="t" style="left:1247.5px;top:674.5px;width:240px;text-align:center;font-size:17.3px;line-height:25px;color:#606266;font-weight:normal;transform:scaleX(0.885)">2025-11-02 23:00:00</div>
<div class="t" style="left:1453.5px;top:664.8px;width:240px;text-align:center;font-size:15px;line-height:22px;color:#606266;font-weight:normal;">9-16周 星期1 5-6节</div>
<div class="t" style="left:1658.5px;top:663.5px;width:160px;text-align:center;font-size:17.3px;line-height:25px;color:#606266;font-weight:normal;transform:scaleX(0.885)">4/24</div>
<div class="t" style="left:1802.0px;top:663.5px;width:100px;text-align:center;font-size:17.3px;line-height:25px;color:#606266;font-weight:normal;transform:scaleX(0.885)">24</div>
<div class="t" style="left:1912.0px;top:663.3px;width:100px;text-align:center;font-size:14.5px;line-height:21px;color:#94bdf9;font-weight:normal;">查看详情</div>
<div class="b" style="left:2002px;top:661px;width:57px;height:28px;background:#409eff;border-radius:3px"></div>
<div class="t" style="left:2002.0px;top:666.0px;width:57px;text-align:center;font-size:12.2px;line-height:18px;color:#fff;font-weight:normal;-webkit-text-stroke:0.2px #fff">报名</div>
<div class="b" style="left:233px;top:784px;width:1866px;height:1px;background:#ebeef5"></div>
<div class="t" style="left:230.5px;top:736.8px;width:160px;text-align:center;font-size:17.3px;line-height:25px;color:#606266;font-weight:normal;transform:scaleX(0.885)">1012500108</div>
<div class="t" style="left:369.5px;top:738.6px;width:160px;text-align:center;font-size:14.5px;line-height:21px;color:#606266;font-weight:normal;">创新港校区</div>
<div class="t" style="left:509.0px;top:738.6px;width:160px;text-align:center;font-size:14.5px;line-height:21px;color:#606266;font-weight:normal;">体育舞蹈</div>
<div class="t" style="left:648.0px;top:738.6px;width:160px;text-align:center;font-size:14.5px;line-height:21px;color:#606266;font-weight:normal;">体育课程</div>
<div class="t" style="left:800.0px;top:738.6px;font-size:14.5px;line-height:21px;color:#606266;font-weight:normal;">体育中...</div>
<div class="t" style="left:1020.0px;top:738.6px;width:200px;text-align:center;font-size:14.5px;line-height:21px;color:#606266;font-weight:normal;">1号巨构</div>
<div class="t" style="left:1247.5px;top:723.8px;width:240px;text-align:center;font-size:17.3px;line-height:25px;color:#606266;font-weight:normal;transform:scaleX(0.885)">2025-10-29 10:00:00</div>
<div class="t" style="left:1247.5px;top:747.8px;width:240px;text-align:center;font-size:17.3px;line-height:25px;color:#606266;font-weight:normal;transform:scaleX(0.885)">2025-11-02 23:00:00</div>
<div class="t" style="left:1453.5px;top:738.1px;width:240px;text-align:center;font-size:15px;line-height:22px;color:#606266;font-weight:normal;">9-16周 星期4 7-8节</div>
<div class="t" style="left:1658.5px;top:736.8px;width:160px;text-align:center;font-size:17.3px;line-height:25px;color:#606266;font-weight:normal;transform:scaleX(0.885)">1/24</div>
<div class="t" style="left:1802.0px;top:736.8px;width:100px;text-align:center;font-size:17.3px;line-height:25px;color:#606266;font-weight:normal;transform:scaleX(0.885)">24</div>
<div class="t" style="left:1912.0px;top:736.6px;width:100px;text-align:center;font-size:14.5px;line-height:21px;color:#94bdf9;font-weight:normal;">查看详情</div>
<div class="b" style="left:2002px;top:735px;width:57px;height:28px;background:#409eff;border-radius:3px"></div>
<div class="t" style="left:2002.0px;top:739.3px;width:57px;text-align:center;font-size:12.2px;line-height:18px;color:#fff;font-weight:normal;-webkit-text-stroke:0.2px #fff">报名</div>
<div class="b" style="left:233px;top:858px;width:1866px;height:1px;background:#ebeef5"></div>
<div class="t" style="left:230.5px;top:810.2px;width:160px;text-align:center;font-size:17.3px;line-height:25px;color:#606266;font-weight:normal;transform:scaleX(0.885)">1012500118</div>
<div class="t" style="left:369.5px;top:812.0px;width:160px;text-align:center;font-size:14.5px;line-height:21px;color:#606266;font-weight:normal;">创新港校区</div>
<div class="t" style="left:509.0px;top:812.0px;width:160px;text-align:center;font-size:14.5px;line-height:21px;color:#606266;font-weight:normal;">体育舞蹈</div>
<div class="t" style="left:648.0px;top:812.0px;width:160px;text-align:center;font-size:14.5px;line-height:21px;color:#606266;font-weight:normal;">体育课程</div>
<div class="t" style="left:800.0px;top:812.0px;font-size:14.5px;line-height:21px;color:#606266;font-weight:normal;">体育中...</div>
<div class="t" style="left:1020.0px;top:812.0px;width:200px;text-align:center;font-size:14.5px;line-height:21px;color:#606266;font-weight:normal;">1号巨构</div>
<div class="t" style="left:1247.5px;top:797.2px;width:240px;text-align:center;font-size:17.3px;line-height:25px;color:#606266;font-weight:normal;transform:scaleX(0.885)">2025-10-29 10:00:00</div>
<div class="t" style="left:1247.5px;top:821.2px;width:240px;text-align:center;font-size:17.3px;line-height:25px;color:#606266;font-weight:normal;transform:scaleX(0.885)">2025-11-02 23:00:00</div>
<div class="t" style="left:1453.5px;top:811.5px;width:240px;text-align:center;font-size:15px;line-height:22px;color:#606266;font-weight:normal;">9-16周 星期4 9-10节</div>
<div class="t" style="left:1658.5px;top:810.2px;width:160px;text-align:center;font-size:17.3px;line-height:25px;color:#606266;font-weight:normal;transform:scaleX(0.885)">1/24</div>
<div class="t" style="left:1802.0px;top:810.2px;width:100px;text-align:center;font-size:17.3px;line-height:25px;color:#606266;font-weight:normal;transform:scaleX(0.885)">24</div>
<div class="t" style="left:1912.0px;top:810.0px;width:100px;text-align:center;font-size:14.5px;line-height:21px;color:#94bdf9;font-weight:normal;">查看详情</div>
<div class="b" style="left:2002px;top:808px;width:57px;height:28px;background:#409eff;border-radius:3px"></div>
<div class="t" style="left:2002.0px;top:812.7px;width:57px;text-align:center;font-size:12.2px;line-height:18px;color:#fff;font-weight:normal;-webkit-text-stroke:0.2px #fff">报名</div>
<div class="b" style="left:233px;top:931px;width:1866px;height:1px;background:#ebeef5"></div>
<div class="t" style="left:230.5px;top:883.5px;width:160px;text-align:center;font-size:17.3px;line-height:25px;color:#606266;font-weight:normal;transform:scaleX(0.885)">1012500119</div>
<div class="t" style="left:369.5px;top:885.3px;width:160px;text-align:center;font-size:14.5px;line-height:21px;color:#606266;font-weight:normal;">创新港校区</div>
<div class="t" style="left:509.0px;top:885.3px;width:160px;text-align:center;font-size:14.5px;line-height:21px;color:#606266;font-weight:normal;">形体塑形</div>
<div class="t" style="left:648.0px;top:885.3px;width:160px;text-align:center;font-size:14.5px;line-height:21px;color:#606266;font-weight:normal;">体育课程</div>
<div class="t" style="left:800.0px;top:885.3px;font-size:14.5px;line-height:21px;color:#606266;font-weight:normal;">体育中...</div>
<div class="t" style="left:1020.0px;top:885.3px;width:200px;text-align:center;font-size:14.5px;line-height:21px;color:#606266;font-weight:normal;">1号巨构</div>
<div class="t" style="left:1247.5px;top:870.5px;width:240px;text-align:center;font-size:17.3px;line-height:25px;color:#606266;font-weight:normal;transform:scaleX(0.885)">2025-10-29 10:00:00</div>
<div class="t" style="left:1247.5px;top:894.5px;width:240px;text-align:center;font-size:17.3px;line-height:25px;color:#606266;font-weight:normal;transform:scaleX(0.885)">2025-11-02 23:00:00</div>
<div class="t" style="left:1453.5px;top:884.8px;width:240px;text-align:center;font-size:15px;line-height:22px;color:#606266;font-weight:normal;">9-16周 星期1 9-10节</div>
<div class="t" style="left:1658.5px;top:883.5px;width:160px;text-align:center;font-size:17.3px;line-height:25px;color:#606266;font-weight:normal;transform:scaleX(0.885)">11/24</div>
<div class="t" style="left:1802.0px;top:883.5px;width:100px;text-align:center;font-size:17.3px;line-height:25px;color:#606266;font-weight:normal;transform:scaleX(0.885)">24</div>
<div class="t" style="left:1912.0px;top:883.3px;width:100px;text-align:center;font-size:14.5px;line-height:21px;color:#94bdf9;font-weight:normal;">查看详情</div>
<div class="b" style="left:2002px;top:881px;width:57px;height:28px;background:#409eff;border-radius:3px"></div>
<div class="t" style="left:2002.0px;top:886.0px;width:57px;text-align:center;font-size:12.2px;line-height:18px;color:#fff;font-weight:normal;-webkit-text-stroke:0.2px #fff">报名</div>
<div class="b" style="left:1880px;top:223px;width:12px;height:717px;background:linear-gradient(90deg,rgba(0,0,0,0) 0%,rgba(0,0,0,0.04) 100%)"></div>
<div class="b" style="left:2099px;top:272px;width:4px;height:406px;background:#8e8e8e"></div>
<div class="b" style="left:2099px;top:678px;width:4px;height:262px;background:#c4c4c4"></div>
<div class="b" style="left:233px;top:940px;width:1856px;height:6px;background:#a3a3a3;border-radius:3px"></div>
<div class="b" style="left:2089px;top:940px;width:10px;height:6px;background:#d0d0d0"></div>
<div class="t" style="left:1652.0px;top:250.6px;font-size:28px;line-height:42px;color:#f84c52;font-weight:normal;">按钮置灰表示人数已满</div>
<div class="t" style="left:1730.5px;top:323.0px;font-size:27.8px;line-height:41px;color:#f84c52;font-weight:normal;">蓝色按钮可以报名</div>
<svg style="left:0;top:0" width="2123" height="1014" viewBox="0 0 2123 1014">
<path d="M1933 270.3 L1968 276.2 L1969.7 268.9 L1994.7 288.1 L1963.1 291.5 L1966 285.1 L1933 271.8 Z" fill="#f95151"/>
<path d="M1952.5 342.5 L1974.8 345.9 L1976.3 338.7 L2000.5 358.8 L1968.8 361.2 L1971.8 353.8 L1952.5 344 Z" fill="#f95151"/>
</svg>
<div class="b" style="left:1998px;top:290px;width:66px;height:34px;border:6.5px solid #f95151;border-radius:4px"></div>
<div class="b" style="left:1995px;top:363px;width:67px;height:34px;border:6.5px solid #f95151;border-radius:4px"></div>
<div class="t" style="left:233.0px;top:960.0px;font-size:14.3px;line-height:21px;color:#f66b6b;font-weight:normal;letter-spacing:0.47px">注意事项：每位同学每学期只有1次退课、1次请假机会，请同学们合理选课。</div>
<div class="t" style="left:1646.0px;top:960.5px;font-size:13.6px;line-height:20px;color:#606266;font-weight:normal;">共 24 条</div>
<div class="b" style="left:1712px;top:957px;width:103px;height:28px;border:1px solid #dcdfe6;border-radius:3px"></div>
<div class="t" style="left:1732.5px;top:960.5px;font-size:13.6px;line-height:20px;color:#606266;font-weight:normal;">15条/页</div>
<svg style="left:1797px;top:968.5px" width="9" height="5" viewBox="0 0 9 5"><path d="M0 0 L4.5 5 L9 0" fill="none" stroke="#c0c4cc" stroke-width="1"/></svg>
<svg style="left:1841px;top:964px" width="8" height="12" viewBox="0 0 8 12"><path d="M6.8 1 L1.5 6 L6.8 11" fill="none" stroke="#c0c4cc" stroke-width="1.4"/></svg>
<div class="t" style="left:1870.5px;top:959.5px;width:30px;text-align:center;font-size:15px;line-height:22px;color:#409eff;font-weight:bold;">1</div>
<div class="t" style="left:1907.0px;top:959.5px;width:30px;text-align:center;font-size:15px;line-height:22px;color:#303133;font-weight:bold;">2</div>
<svg style="left:1958px;top:964px" width="8" height="12" viewBox="0 0 8 12"><path d="M1.2 1 L6.5 6 L1.2 11" fill="none" stroke="#4a4c50" stroke-width="1.4"/></svg>
<div class="t" style="left:2001.0px;top:960.0px;font-size:14px;line-height:21px;color:#606266;font-weight:normal;">前往</div>
<div class="b" style="left:2034px;top:957px;width:46px;height:28px;border:1px solid #dcdfe6;border-radius:3px"></div>
<div class="t" style="left:2034.0px;top:960.0px;width:46px;text-align:center;font-size:14.5px;line-height:21px;color:#606266;font-weight:normal;">1</div>
<div class="t" style="left:2082.0px;top:960.0px;font-size:14px;line-height:21px;color:#606266;font-weight:normal;">页</div>
<svg style="left:2070px;top:955px" width="60" height="62" viewBox="0 0 60 62">
<defs><linearGradient id="rg" x1="0.75" y1="0.05" x2="0.25" y2="0.95"><stop offset="0" stop-color="#7650f4"/><stop offset="0.45" stop-color="#5a5ef8"/><stop offset="1" stop-color="#2a7fff"/></linearGradient></defs>
<circle cx="32.2" cy="33" r="25.2" fill="url(#rg)"/>
<path d="M13.5 36 A19 23.5 0 0 1 51 36" fill="none" stroke="#dfe4fb" stroke-width="1.5"/>
<rect x="11" y="28" width="5" height="12" rx="2.5" fill="#cdd6fb"/>
<rect x="49" y="28" width="5" height="12" rx="2.5" fill="#cdd6fb"/>
<rect x="19.5" y="23" width="26.5" height="17.5" rx="2.5" fill="#d7dffa"/>
<path d="M36 40 L46 46.5 L46 39 Z" fill="#d0daf9"/>
<rect x="22" y="27.8" width="21" height="7.6" rx="3.8" fill="#5e4ff2"/>
<circle cx="28" cy="31.5" r="1.2" fill="#fff"/><circle cx="36.5" cy="31.5" r="1.2" fill="#fff"/>
<path d="M27.4 44 l1.1 2.9 l2.9 1.1 l-2.9 1.1 l-1.1 2.9 l-1.1 -2.9 l-2.9 -1.1 l2.9 -1.1 z" fill="#fff"/>
<circle cx="34.6" cy="50" r="1.4" fill="#fff"/>
</svg>
</body></html>
